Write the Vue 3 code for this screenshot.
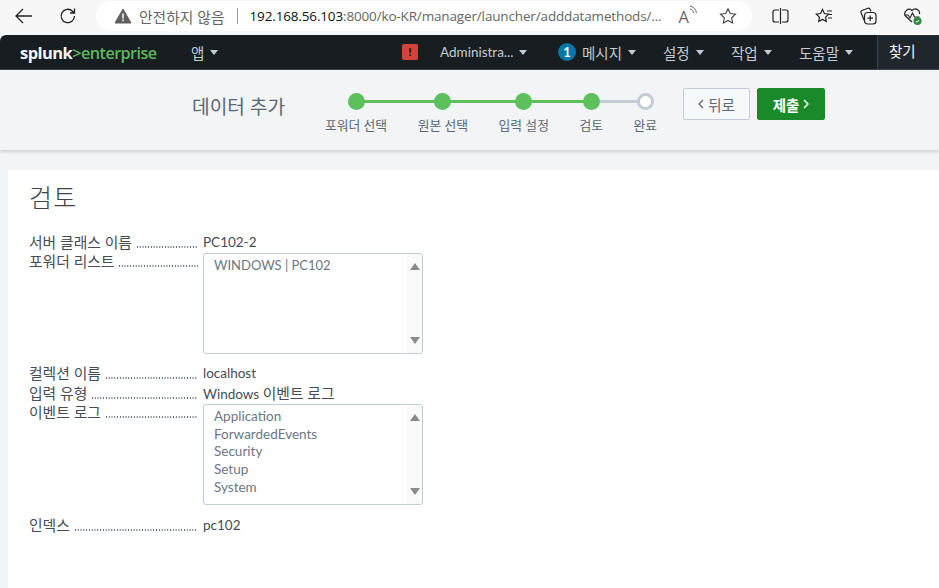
<script setup>
const menu = [
  { label: "메시지", badge: "1", width: 105 },
  { label: "설정", width: 68 },
  { label: "작업", width: 68 },
  { label: "도움말", width: 78 },
];

// line = distance to the next step's dot
const steps = [
  { label: "포워더 선택", done: true, line: 87 },
  { label: "원본 선택", done: true, line: 81 },
  { label: "입력 설정", done: true, line: 68 },
  { label: "검토", done: true, line: 54, grey: true },
  { label: "완료", done: false },
];
</script>

<template>
  <div class="page">
    <div class="browser">
      <svg class="back" width="18" height="16" viewBox="0 0 18 16"><path d="M8 1 1 8l7 7M1 8h16" fill="none" stroke="#222" stroke-width="1.3"/></svg>
      <svg class="reload" width="18" height="18" viewBox="0 0 18 18"><path d="M15.5 9a6.7 6.7 0 1 1-1.9-4.7L15.5 6M15.5 1.5V6H11" fill="none" stroke="#222" stroke-width="1.3"/></svg>
      <div class="address">
        <svg width="18" height="16" viewBox="0 0 18 16"><path d="M9 1 17 15H1z" fill="#5f5f5f" stroke="#5f5f5f" stroke-linejoin="round"/><path d="M9 5.5v5M9 11.6v1.6" stroke="#fff" stroke-width="1.5"/></svg>
        <span class="insecure">안전하지 않음</span>
        <span class="sep"></span>
        <span class="url"><b>192.168.56.103</b>:8000/ko-KR/manager/launcher/adddatamethods/...</span>
        <span class="aloud">A<svg width="9" height="10" viewBox="0 0 9 10"><path d="M1 1c3 .5 6 3 6.500 7M1 4c2 .3 3.300 1.700 3.600 4" fill="none" stroke="#666" stroke-width="1"/></svg></span>
        <svg class="star" width="18" height="18" viewBox="0 0 18 18"><path d="m9 1.700 2.300 4.800 5.200.7-3.800 3.600.9 5.200L9 13.500 4.400 16l.9-5.200L1.500 7.200l5.200-.7z" fill="none" stroke="#444" stroke-width="1.100"/></svg>
      </div>
      <div class="tools">
        <svg width="17" height="16" viewBox="0 0 17 16"><path d="M7 2H3a2 2 0 0 0-2 2v8a2 2 0 0 0 2 2h4M8.500 0v16M10 2h4a2 2 0 0 1 2 2v8a2 2 0 0 1-2 2h-4" fill="none" stroke="#222" stroke-width="1.200"/></svg>
        <svg width="18" height="17" viewBox="0 0 18 17"><path d="m7.500 1.500 1.900 4 4.300.6-3.100 3 .7 4.300-3.800-2-3.800 2 .7-4.300-3.100-3 4.300-.6z" fill="none" stroke="#222" stroke-width="1.200"/><path d="M12 3h5M14 6.500h3M13 10h4" stroke="#222" stroke-width="1.200"/></svg>
        <svg width="18" height="18" viewBox="0 0 18 18"><path d="M5 13 2 5.500a1.500 1.500 0 0 1 .9-2L9 1.200a1.500 1.500 0 0 1 1.900.8L12 4.500" fill="none" stroke="#222" stroke-width="1.200"/><rect x="5.500" y="5.500" width="11.500" height="11.500" rx="3" fill="none" stroke="#222" stroke-width="1.200"/><path d="M11.200 8.500v5.500M8.500 11.200H14" stroke="#222" stroke-width="1.200"/></svg>
        <svg width="20" height="19" viewBox="0 0 20 19"><path d="M9 15 2.500 9A4.300 4.300 0 0 1 9 3.500 4.300 4.300 0 0 1 16.500 7" fill="none" stroke="#222" stroke-width="1.200"/><path d="M1 8h4l2 3 2.500-5 2 4h5" fill="none" stroke="#222" stroke-width="1.100"/><circle cx="14.500" cy="14" r="4" fill="#2d8a3e"/><path d="m12.800 14 1.300 1.300 2-2.300" fill="none" stroke="#fff" stroke-width="1"/></svg>
      </div>
    </div>

    <nav class="topnav">
      <div class="logo">splunk<span>&gt;enterprise</span></div>
      <div class="item ko">앱<i class="caret"></i></div>
      <div class="right">
        <div class="alert">!</div>
        <div class="item admin">Administra...<i class="caret"></i></div>
        <div v-for="m in menu" :key="m.label" class="item ko" :style="{ width: m.width + 'px' }">
          <span v-if="m.badge" class="badge">{{ m.badge }}</span>
          {{ m.label }}<i class="caret"></i>
        </div>
        <div class="find">찾기</div>
      </div>
    </nav>

    <header class="wizard">
      <h2>데이터 추가</h2>
      <div class="steps">
        <div v-for="s in steps" :key="s.label" class="step">
          <span class="dot" :class="{ open: !s.done }">
            <span v-if="s.line" class="line" :class="{ grey: s.grey }" :style="{ width: s.line + 'px' }"></span>
          </span>
          <span class="step-label">{{ s.label }}</span>
        </div>
      </div>
      <div class="buttons">
        <button class="btn back-btn">
          <svg width="6" height="10" viewBox="0 0 6 10"><path d="M5 1 1 5l4 4" fill="none" stroke="currentColor" stroke-width="1.300"/></svg>
          뒤로
        </button>
        <button class="btn next-btn">
          제출
          <svg width="6" height="10" viewBox="0 0 6 10"><path d="m1 1 4 4-4 4" fill="none" stroke="currentColor" stroke-width="1.500"/></svg>
        </button>
      </div>
    </header>

    <main class="panel">
      <h1>검토</h1>
      <div class="review">
        <div class="row">
          <div class="key"><span>서버 클래스 이름</span><i></i></div>
          <div>PC102-2</div>
        </div>
        <div class="row has-box">
          <div class="key"><span>포워더 리스트</span><i></i></div>
          <div class="listbox">
            <div class="upper">WINDOWS | PC102</div>
            <div class="scroll"><b class="up"></b><b class="down"></b></div>
          </div>
        </div>
        <div class="row gap">
          <div class="key"><span>컬렉션 이름</span><i></i></div>
          <div>localhost</div>
        </div>
        <div class="row">
          <div class="key"><span>입력 유형</span><i></i></div>
          <div>Windows <span class="ko-inline">이벤트 로그</span></div>
        </div>
        <div class="row has-box">
          <div class="key"><span>이벤트 로그</span><i></i></div>
          <div class="listbox">
            <div>Application</div>
            <div>ForwardedEvents</div>
            <div>Security</div>
            <div>Setup</div>
            <div>System</div>
            <div class="scroll"><b class="up"></b><b class="down"></b></div>
          </div>
        </div>
        <div class="row gap last">
          <div class="key"><span>인덱스</span><i></i></div>
          <div>pc102</div>
        </div>
      </div>
    </main>
  </div>
</template>

<style scoped>
.page {
  width: 939px;
  height: 588px;
  overflow: hidden;
  background: #f2f4f5;
  font-family: Lato, "Noto Sans CJK KR", sans-serif;
  font-size: 14px;
  color: #454d56;
}

.browser {
  height: 35px;
  background: #f7f7f7;
  display: flex;
  align-items: flex-start;
}
.back { margin: 8px 0 0 15px; }
.reload { margin: 7px 0 0 26px; }
.address {
  margin: 1px 0 0 19px;
  width: 656px;
  height: 30px;
  border-radius: 15px;
  background: #fff;
  display: flex;
  align-items: center;
  padding-left: 18px;
  box-sizing: border-box;
  font-family: "Open Sans", "Noto Sans CJK KR", sans-serif;
  font-size: 13.500px;
  color: #666;
  white-space: nowrap;
}
.insecure { margin-left: 7px; color: #666; font-size: 14.800px; }
.sep { width: 1px; height: 16px; background: #999; margin: 0 12px; }
.url { width: 424px; letter-spacing: -.15px; }
.url b { font-weight: 400; color: #111; }
.aloud { margin-left: 5px; font-size: 16.500px; display: flex; align-items: flex-start; width: 40px; }
.tools {
  margin-left: 20px;
  display: flex;
  align-items: center;
  gap: 26px;
  height: 32px;
}

.topnav {
  height: 34px;
  background: #171d21;
  border-radius: 6px 0 0 0;
  display: flex;
  align-items: center;
  color: #c3cbd4;
  border-bottom: 1px solid #3c444d;
}
.logo {
  margin-left: 20px;
  width: 171px;
  font-family: "Open Sans", sans-serif;
  font-weight: 700;
  font-size: 16.500px;
  letter-spacing: -.55px;
  color: #f2f4f5;
}
.logo span { color: #5cb85c; font-weight: 600; font-size: 16.200px; }
.item { display: flex; align-items: center; white-space: nowrap; font-size: 13.500px; }
.item.ko { font-size: 14.500px; }
.caret {
  width: 0;
  height: 0;
  margin-left: 6px;
  margin-top: 1px;
  border: 4px solid transparent;
  border-top: 5px solid #c3cbd4;
  border-bottom: 0;
}
.right { margin-left: auto; display: flex; align-items: center; height: 100%; }
.alert {
  width: 16px;
  height: 16px;
  border-radius: 2px;
  background: #d9423a;
  color: #171d21;
  font-weight: 900;
  font-size: 12px;
  line-height: 16px;
  text-align: center;
  margin-right: 22px;
}
.admin { width: 118px; }
.badge {
  width: 18px;
  height: 18px;
  border-radius: 50%;
  background: #0877a6;
  color: #fff;
  text-align: center;
  line-height: 18px;
  font-size: 13px;
  font-weight: 700;
  margin-right: 6px;
}
.find {
  width: 62px;
  height: 34px;
  box-sizing: border-box;
  padding-left: 11px;
  line-height: 32px;
  background: #20272c;
  border-left: 1px solid #3c444d;
  border-top: 1px solid #2b3338;
  color: #f2f4f5;
  font-size: 14.500px;
}

.wizard {
  height: 80px;
  background: #f2f4f5;
  box-shadow: 0 2px 3px rgba(60, 68, 77, .2);
  display: flex;
  align-items: flex-start;
}
.wizard h2 {
  margin: 24px 0 0 192px;
  width: 133px;
  font-weight: 400;
  font-size: 19.200px;
  line-height: 26px;
  color: #5c6773;
}
.steps { display: flex; gap: 30.500px; margin-top: 23px; isolation: isolate; }
.step { display: flex; flex-direction: column; align-items: center; gap: 7px; }
.dot {
  position: relative;
  width: 17px;
  height: 17px;
  border-radius: 50%;
  background: #5cc05c;
  box-sizing: border-box;
}
.dot.open { background: #fff; border: 3px solid #c3cbd4; }
.line {
  position: absolute;
  left: 8px;
  top: 7px;
  height: 3px;
  background: #5cc05c;
  z-index: -1;
}
.line.grey { background: #c3cbd4; }
.step-label { font-size: 12.800px; line-height: 16px; color: #5c6773; white-space: nowrap; }
.buttons { display: flex; gap: 7px; margin: 18px 0 0 26px; }
.btn {
  height: 32px;
  border-radius: 2px;
  font-family: Lato, "Noto Sans CJK KR", sans-serif;
  font-size: 14.500px;
  padding: 0;
  display: flex;
  align-items: center;
  justify-content: center;
  gap: 4px;
}
.back-btn { width: 67px; background: #f7f8fa; border: 1px solid #c3cbd4; color: #5c6773; }
.next-btn { width: 68px; background: #1a8929; border: 1px solid #1a8929; color: #fff; font-weight: 700; }

.panel {
  margin: 20px 0 0 8px;
  height: 418px;
  background: #fff;
  padding: 10px 0 0 21px;
}
.panel h1 {
  margin: 0;
  font-weight: 300;
  font-size: 25px;
  line-height: 34px;
  color: #3c444d;
  letter-spacing: 1.200px;
}
.review { margin-top: 18px; width: 395px; }
.row { display: flex; height: 20px; line-height: 20px; font-size: 13.500px; }
.row.has-box { height: auto; margin-top: -1px; }
.row.gap { margin-top: 9px; }
.row.last { margin-top: 10px; }
.key { width: 174px; height: 20px; display: flex; white-space: nowrap; flex: none; }
.key span { flex: none; padding-right: 4px; font-size: 14.800px; }
/* dotted leader between label and value */
.key i {
  flex: 1;
  margin-right: 5px;
  background: radial-gradient(circle, #5c6773 .6px, transparent .9px) 0 14px / 2.800px 2px repeat-x;
}
.ko-inline { font-size: 14.800px; }
.listbox {
  position: relative;
  width: 220px;
  height: 101px;
  margin-top: 2px;
  box-sizing: border-box;
  border: 1px solid #c3cbd4;
  border-radius: 3px;
  padding: 3px 0 0 10px;
  color: #6b7785;
  line-height: 17.700px;
}
.upper { font-size: 13px; }
.scroll {
  position: absolute;
  top: 0;
  right: 0;
  bottom: 0;
  width: 15px;
  background: #fafafa;
  border-radius: 0 3px 3px 0;
}
.scroll b {
  position: absolute;
  left: 3px;
  width: 0;
  height: 0;
  border-left: 5px solid transparent;
  border-right: 5px solid transparent;
}
.up { top: 9px; border-bottom: 7px solid #8a8a8a; }
.down { bottom: 9px; border-top: 7px solid #8a8a8a; }
</style>
